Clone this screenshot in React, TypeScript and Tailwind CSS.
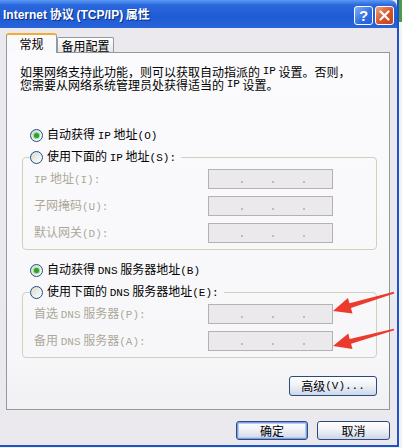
import React from "react";

const cjk = "font-['Noto_Sans_CJK_SC',sans-serif]";

function M({ children }: { children: React.ReactNode }) {
	return <span className="font-['Liberation_Mono',monospace] text-[11px] leading-none">{children}</span>;
}

function Radio({ checked }: { checked?: boolean }) {
	return (
		<span className="flex h-[13px] w-[13px] shrink-0 items-center justify-center rounded-full border border-[#1c5180] bg-[linear-gradient(135deg,#d8d8d2,#ffffff)]">
			{checked && <span className="h-[5px] w-[5px] rounded-full bg-[#28a428] shadow-[0_0_0_1px_#9bd69b]" />}
		</span>
	);
}

function RadioRow({ checked, children }: { checked?: boolean; children: React.ReactNode }) {
	return (
		<div className="flex h-[22px] items-center gap-[4px] text-[12px] leading-none text-black">
			<Radio checked={checked} />
			<span className="whitespace-nowrap">{children}</span>
		</div>
	);
}

function IpField() {
	return (
		<div className="flex h-[20px] w-[125px] items-center gap-[29px] border border-[#b3b1b3] bg-[#ebe9eb] pl-[32px] pt-[6px]">
			<span className="h-[2px] w-[2px] bg-[#bdbbbd]" />
			<span className="h-[2px] w-[2px] bg-[#bdbbbd]" />
			<span className="h-[2px] w-[2px] bg-[#bdbbbd]" />
		</div>
	);
}

function FieldRow({ label }: { label: React.ReactNode }) {
	return (
		<div className="flex h-[20px] items-center">
			<span className="w-[174px] whitespace-nowrap text-[12px] leading-none text-[#aca899]">{label}</span>
			<IpField />
		</div>
	);
}

function XpButton({ children, def, className }: { children: React.ReactNode; def?: boolean; className?: string }) {
	return (
		<div
			className={`flex items-center justify-center rounded-[3px] border border-[#2b4a7e] bg-[linear-gradient(to_bottom,#ffffff_0%,#f1f2f6_45%,#ccd6ea_100%)] text-[12px] leading-none text-black ${
				def ? "shadow-[inset_0_0_0_1px_#7d9de6,inset_0_0_0_2px_#b6caf2]" : ""
			} ${className ?? ""}`}
		>
			{children}
		</div>
	);
}

export default function App() {
	return (
		<div className={`relative flex h-[448px] w-[402px] overflow-hidden bg-[#eeeeee] ${cjk}`}>
			<div className="flex h-[447px] w-[399px] flex-col border-r-2 border-b-2 border-[#1d52c9] bg-[#ebe9ed]">
				{/* title bar */}
				<div className="flex h-[28px] shrink-0 items-center rounded-tr-[7px] bg-[linear-gradient(to_bottom,#5b9af5_0%,#2a68dc_18%,#1f5bd3_60%,#2763d9_100%)] pl-[3px] pr-[3px]">
					<span className="whitespace-nowrap text-[12px] font-bold leading-none text-white [text-shadow:1px_1px_0_#0c2d84]">
						<span className="font-['Liberation_Sans',sans-serif]">Internet</span> 协议 <span className="font-['Liberation_Sans',sans-serif]">(TCP/IP)</span> 属性
					</span>
					<div className="ml-auto flex gap-[2px] pt-[3px]">
						<div className="flex h-[19px] w-[19px] items-center justify-center rounded-[3px] border border-white bg-[linear-gradient(135deg,#7fb0f7,#2f6ce0_60%,#2560d6)] font-['Liberation_Sans',sans-serif] text-[15px] font-bold leading-none text-white">
							?
						</div>
						<div className="flex h-[19px] w-[19px] items-center justify-center rounded-[3px] border border-white bg-[linear-gradient(135deg,#f0a07c,#d8522a_55%,#c4421c)]">
							<svg width="11" height="11" viewBox="0 0 11 11">
								<path d="M1.5 1.5 L9.5 9.5 M9.5 1.5 L1.5 9.5" stroke="white" strokeWidth="2.2" strokeLinecap="round" />
							</svg>
						</div>
					</div>
				</div>

				{/* body */}
				<div className="flex flex-1 flex-col pl-[6px] pr-[7px]">
					{/* tabs */}
					<div className="mt-[5px] flex h-[19px] shrink-0 items-end">
						<div className="relative z-10 -mb-px flex h-[20px] w-[51px] items-center justify-center rounded-t-[3px] border-x border-t-2 border-x-[#919b9c] border-t-[#f2ab35] bg-[#fafafc] text-[12px] leading-none text-black">
							常规
						</div>
						<div className="flex h-[15px] w-[57px] items-center justify-center rounded-t-[2px] border-x border-t border-[#919b9c] bg-[linear-gradient(to_bottom,#ffffff,#e8e7ea)] pt-[1px] text-[12px] leading-none text-black">
							备用配置
						</div>
					</div>

					{/* tab page */}
					<div className="flex h-[358px] shrink-0 flex-col border border-[#919b9c] bg-[linear-gradient(to_bottom,#fbfbfd,#f7f7f9_85%,#f1f0f2)]">
						<div className="mt-[12px] flex flex-col pl-[13px] text-[12px] leading-none text-black">
							<div className="flex h-[13px] items-center whitespace-nowrap">
								如果网络支持此功能，则可以获取自动指派的&nbsp;<M>IP</M>&nbsp;设置。否则，
							</div>
							<div className="flex h-[13px] items-center whitespace-nowrap">
								您需要从网络系统管理员处获得适当的&nbsp;<M>IP</M>&nbsp;设置。
							</div>
						</div>

						<div className="ml-[23px] mt-[33px]">
							<RadioRow checked>
								自动获得 <M>IP</M> 地址<M>(O)</M>
							</RadioRow>
						</div>
						<fieldset className="ml-[15px] mr-[12px] rounded-[4px] border border-[#d0d0bf] pb-[6px]">
							<legend className="ml-[7px] pr-[5px]">
								<RadioRow>
									使用下面的 <M>IP</M> 地址<M>(S):</M>
								</RadioRow>
							</legend>
							<div className="mt-[1px] flex flex-col gap-[7px] pl-[11px]">
								<FieldRow label={<><M>IP</M> 地址<M>(I):</M></>} />
								<FieldRow label={<>子网掩码<M>(U):</M></>} />
								<FieldRow label={<>默认网关<M>(D):</M></>} />
							</div>
						</fieldset>

						<div className="ml-[23px] mt-[9px]">
							<RadioRow checked>
								自动获得 <M>DNS</M> 服务器地址<M>(B)</M>
							</RadioRow>
						</div>
						<fieldset className="ml-[15px] mr-[12px] rounded-[4px] border border-[#d0d0bf] pb-[6px]">
							<legend className="ml-[7px] pr-[5px]">
								<RadioRow>
									使用下面的 <M>DNS</M> 服务器地址<M>(E):</M>
								</RadioRow>
							</legend>
							<div className="mt-[1px] flex flex-col gap-[7px] pl-[11px]">
								<FieldRow label={<>首选 <M>DNS</M> 服务器<M>(P):</M></>} />
								<FieldRow label={<>备用 <M>DNS</M> 服务器<M>(A):</M></>} />
							</div>
						</fieldset>

						<div className="mb-[13px] mr-[12px] mt-auto flex justify-end">
							<XpButton className="h-[20px] w-[88px]">
								高级<M>(V)...</M>
							</XpButton>
						</div>
					</div>

					{/* dialog buttons */}
					<div className="mt-[11px] flex justify-end gap-[9px]">
						<XpButton def className="h-[19px] w-[72px]">
							确定
						</XpButton>
						<XpButton className="h-[19px] w-[73px]">取消</XpButton>
					</div>
				</div>
			</div>
			<div className="flex w-[3px] flex-col">
				<div className="h-[22px] bg-[#4c9a45]" />
				<div className="flex-1 bg-[#f2f2f2]" />
			</div>

			{/* annotation arrows */}
			<svg className="pointer-events-none absolute left-0 top-0" width="402" height="448" viewBox="0 0 402 448">
				<polygon
					fill="#ec3a2e"
					points="394.2,293.4 350.9,308.1 352.5,313.4 333,311 347.9,298.1 349.5,303.3 393.8,291.8"
				/>
				<polygon
					fill="#ec3a2e"
					points="394.2,330.3 351.1,343.7 352.5,349.0 333,346 348.3,333.6 349.7,338.9 393.8,328.7"
				/>
			</svg>
		</div>
	);
}
